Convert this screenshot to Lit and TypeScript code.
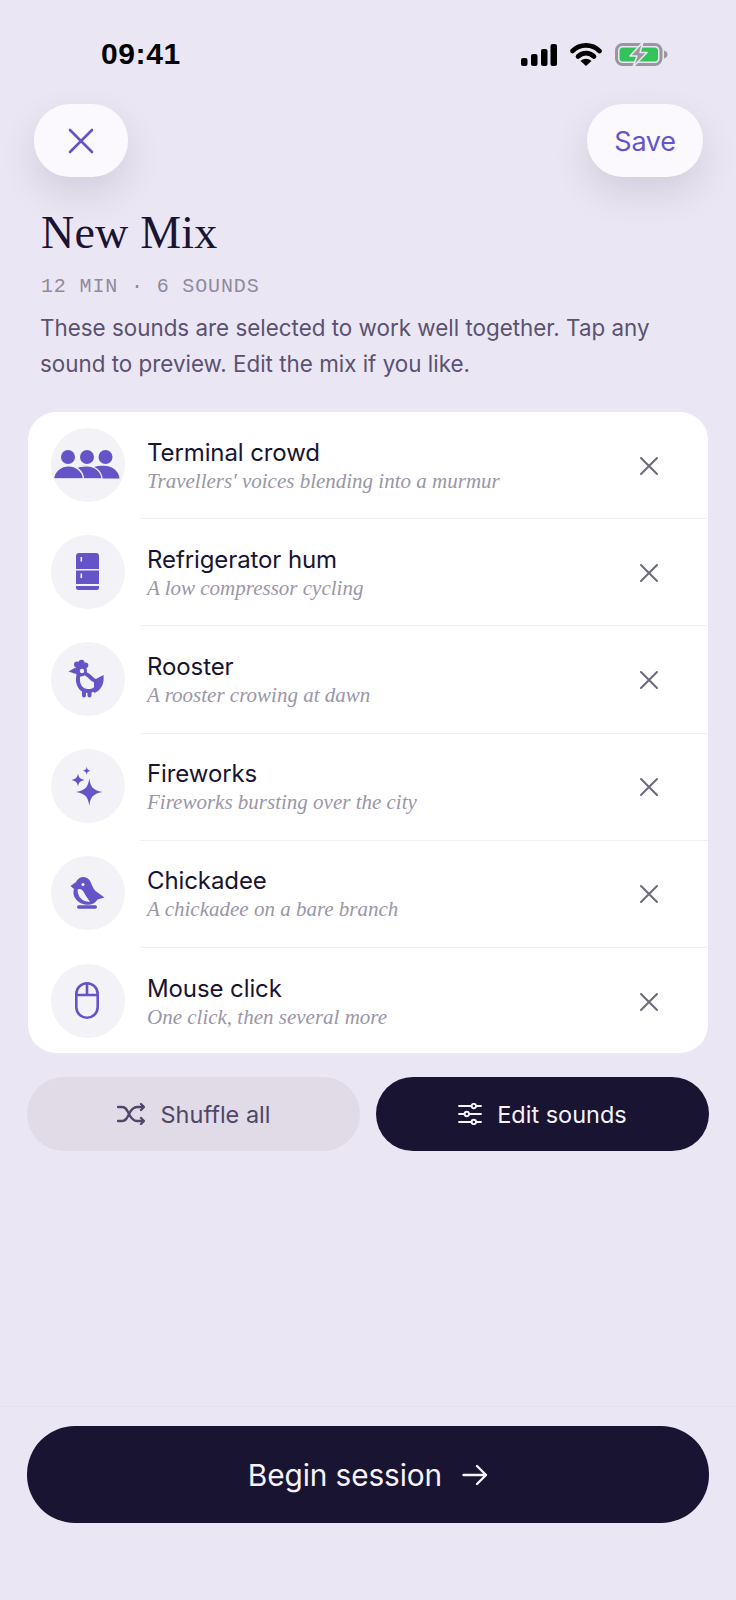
import { LitElement, html, css, svg } from "lit";
import { customElement } from "lit/decorators.js";

const icons: Record<string, unknown> = {
  crowd: svg`
    <circle cx="17" cy="29" r="7"/><circle cx="36" cy="29" r="7"/><circle cx="54.5" cy="29" r="7"/>
    <path d="M47 50.5 C47 44 44 40.5 42 39.5 C45 38 49 37.8 53 37.8 C61 37.8 68 43 68.5 50.5 Z"/>
    <path class="cut" d="M29 50.8 C29 45 27 42 25 40 C28 38 32 37.8 36 37.8 C44 37.8 50.5 43.5 51 50.8 Z"/>
    <path class="cut" d="M2.5 50.8 C3 43 10 37.8 17.5 37.8 C25 37.8 32 43 32.5 50.8 Z"/>`,
  fridge: svg`
    <path d="M28 18 H45 a3 3 0 0 1 3 3 V34 H25 V21 a3 3 0 0 1 3-3 Z"/>
    <rect x="25" y="35.5" width="23" height="13.5"/>
    <path d="M25 51 H48 V52.5 a2.5 2.5 0 0 1 -2.5 2.5 H27.5 a2.5 2.5 0 0 1 -2.5 -2.5 Z"/>
    <rect class="hole" x="29.5" y="22" width="1.6" height="4.5"/>
    <rect class="hole" x="29.5" y="38.5" width="1.6" height="4.5"/>`,
  rooster: svg`
    <circle cx="26" cy="22.5" r="3"/><circle cx="30.5" cy="20.8" r="3"/><circle cx="34.5" cy="23.2" r="2.8"/>
    <circle cx="30" cy="28.5" r="6"/>
    <path d="M24.5 25.5 L17.5 29.5 L25 32 Z"/>
    <path d="M43 38 L52.5 33 C53.5 42 50 48.5 43 51 Z"/>
    <path class="line" d="M27.5 33 C25.5 41 29 49 37 49 C41 49 44 48 46 45 M43.5 38.5 C41 38 39 33.5 35 32"/>
    <path class="line" d="M33 50 V53.5 M38.5 50 V53.5"/>
    <circle class="hole" cx="31" cy="29" r="2.2"/>`,
  sparkle: svg`
    <path d="M38.3 29.5 C39.8 38 41.5 41 51.5 43 C41.5 45 39.8 48 38.3 56.5 C36.8 48 35 45 25 43 C35 41 36.8 38 38.3 29.5 Z"/>
    <path d="M27 24.5 C27.7 28.2 28.8 30 33.5 31 C28.8 32 27.7 33.8 27 37.5 C26.3 33.8 25.2 32 20.5 31 C25.2 30 26.3 28.2 27 24.5 Z"/>
    <path d="M35.7 17.7 C36.2 20.2 36.8 21 39.7 21.7 C36.8 22.4 36.2 23.2 35.7 25.7 C35.2 23.2 34.6 22.4 31.7 21.7 C34.6 21 35.2 20.2 35.7 17.7 Z"/>`,
  chickadee: svg`
    <path d="M19.5 30 L25 26 C28 20 34.5 19.5 38.5 24 C40.5 27 41 31 44.5 35 L53.5 41.5 L46.5 43.5 C44 48 39 49.5 34 48.5 C26 47 20.5 40 23 33 Z"/>
    <rect x="26" y="49.3" width="20" height="3.4" rx="1.7"/>
    <path class="hole" d="M26.5 33.5 C29 32 31.5 33.5 33 36.5 C35 40.5 37 43 39 45.7 C33 46.3 26.5 42 26.5 33.5 Z"/>
    <circle class="hole" cx="32" cy="28.5" r="1.5"/>`,
  mouse: svg`
    <rect class="thin" x="25.3" y="19.3" width="21.4" height="34.4" rx="10.7"/>
    <path class="thin" d="M25.3 31 H46.7 M36 19.3 V31"/>`,
};

const sounds = [
  { icon: "crowd", title: "Terminal crowd", sub: "Travellers' voices blending into a murmur" },
  { icon: "fridge", title: "Refrigerator hum", sub: "A low compressor cycling" },
  { icon: "rooster", title: "Rooster", sub: "A rooster crowing at dawn" },
  { icon: "sparkle", title: "Fireworks", sub: "Fireworks bursting over the city" },
  { icon: "chickadee", title: "Chickadee", sub: "A chickadee on a bare branch" },
  { icon: "mouse", title: "Mouse click", sub: "One click, then several more" },
];

@customElement("app-root")
export class AppRoot extends LitElement {
  static styles = css`
    :host { display: block; }
    .page {
      height: 1600px; box-sizing: border-box; background: #ebe6f3; display: flex; flex-direction: column;
      font-family: Inter, "Noto Sans", sans-serif; color: #1a1433; overflow: hidden;
    }
    .status { height: 104px; box-sizing: border-box; padding: 38px 68px 0 101px; display: flex; justify-content: space-between; align-items: flex-start; }
    .time { font: 700 30px/32px "Liberation Sans", sans-serif; color: #000; letter-spacing: 0.6px; }
    .status-icons { display: flex; align-items: center; gap: 13px; margin-top: 4px; }
    .status-icons svg { display: block; }
    .topbar { display: flex; justify-content: space-between; padding: 0 33px 0 34px; height: 73px; }
    .pill {
      height: 73px; background: #fcf9fe; border-radius: 36px; display: flex; align-items: center; justify-content: center;
      box-shadow: 0 16px 36px rgba(40, 30, 70, 0.12); color: #6554c8;
    }
    .pill.close { width: 94px; }
    .pill.save { width: 116px; font-size: 27px; letter-spacing: -0.3px; padding-top: 2px; box-sizing: border-box; }
    .head { padding: 28px 40px 0 41px; }
    h1 { margin: 0; font: 400 46px/56px "Liberation Serif", serif; color: #1a1433; letter-spacing: 0.2px; }
    .meta { margin-top: 14px; font: 400 20px/24px "Liberation Mono", monospace; letter-spacing: 0.85px; color: #8f8a9e; }
    .desc { margin: 11px 0 0 -1px; font-size: 22.4px; line-height: 36px; color: #5a5270; }
    .card { margin: 30px 28px 0; background: #fff; border-radius: 28px; height: 641px; overflow: hidden; }
    .row { height: 107.2px; display: flex; align-items: center; padding: 0 49px 0 23px; position: relative; box-sizing: border-box; }
    .row + .row::before { content: ""; position: absolute; top: -1px; left: 112px; right: 0; height: 1px; background: #f1eff4; }
    .circle { width: 74px; height: 74px; border-radius: 50%; background: #f3f2f6; flex: none; margin-top: -2px; }
    .circle svg { display: block; fill: #6554c8; }
    .circle .cut { stroke: #f3f2f6; stroke-width: 1.3; }
    .circle .hole { fill: #f3f2f6; }
    .circle .line { fill: none; stroke: #6554c8; stroke-width: 4; stroke-linecap: round; stroke-linejoin: round; }
    .circle .thin { fill: none; stroke: #6554c8; stroke-width: 2.6; }
    .text { margin-left: 22px; flex: 1; min-width: 0; }
    .title { font-size: 24px; line-height: 30px; color: #1a1433; letter-spacing: -0.1px; }
    .sub { font: italic 400 21px/26px "Liberation Serif", serif; color: #9a96a8; margin-top: 0; }
    .x { flex: none; display: block; }
    .actions { display: flex; gap: 16px; padding: 24px 27px 0; }
    .btn { flex: 1; height: 74px; border-radius: 37px; display: flex; align-items: center; justify-content: center; gap: 16px; font-size: 23.5px; }
    .btn.soft { background: #e0dbe7; color: #4f4668; }
    .btn.dark { background: #1a1433; color: #f5f2fa; gap: 15px; }
    .footer { margin-top: auto; border-top: 1px solid #e6e1ee; padding: 19px 27px 77px; }
    .begin { height: 97px; border-radius: 48px; background: #1a1433; color: #f5f2fa; display: flex; align-items: center; justify-content: center; gap: 20px; font-size: 29.8px; letter-spacing: -0.1px; }
    svg { flex: none; }
  `;

  render() {
    return html`
      <div class="page">
        <div class="status">
          <div class="time">09:41</div>
          <div class="status-icons">
            <svg width="36" height="22" viewBox="0 0 36 22" fill="#000">
              <rect x="0" y="14" width="6.5" height="8" rx="2"/><rect x="10" y="10" width="6.5" height="12" rx="2"/>
              <rect x="20" y="5" width="6.5" height="17" rx="2"/><rect x="29.5" y="0" width="6.5" height="22" rx="2"/>
            </svg>
            <svg width="32" height="23" viewBox="0 0 32 23">
              <path d="M2.5 8 C10 0.5 22 0.5 29.5 8" fill="none" stroke="#000" stroke-width="4.6" stroke-linecap="round"/>
              <path d="M8 13.5 C12.5 9 19.5 9 24 13.5" fill="none" stroke="#000" stroke-width="4.6" stroke-linecap="round"/>
              <path d="M10.5 18 C14 15 18 15 21.5 18 L16 23 Z" fill="#000"/>
            </svg>
            <svg width="53" height="25" viewBox="0 0 53 25">
              <rect x="1.5" y="2.5" width="44.5" height="20" rx="6" fill="none" stroke="#9a979c" stroke-width="3"/>
              <rect x="4.5" y="5.5" width="38.5" height="14" rx="3.5" fill="#34c35a"/>
              <path d="M49 8.5 C51.5 9.2 52.5 10.5 52.5 12.5 C52.5 14.5 51.5 15.8 49 16.5 Z" fill="#9a979c"/>
              <path d="M28 0 L15 14 H22 L18 25 L32 10.5 H25 Z" fill="#9a979c" stroke="#ebe6f3" stroke-width="1.6" stroke-linejoin="round"/>
            </svg>
          </div>
        </div>
        <div class="topbar">
          <div class="pill close">
            <svg width="26" height="26" viewBox="0 0 26 26" fill="none" stroke="#6554c8" stroke-width="2.6" stroke-linecap="round"><path d="M2 2 L24 24 M24 2 L2 24"/></svg>
          </div>
          <div class="pill save">Save</div>
        </div>
        <div class="head">
          <h1>New Mix</h1>
          <div class="meta">12 MIN · 6 SOUNDS</div>
          <p class="desc">These sounds are selected to work well together. Tap any<br />sound to preview. Edit the mix if you like.</p>
        </div>
        <div class="card">
          ${sounds.map(
            (s) => html`
              <div class="row">
                <div class="circle"><svg width="74" height="74" viewBox="0 0 74 74">${icons[s.icon]}</svg></div>
                <div class="text">
                  <div class="title">${s.title}</div>
                  <div class="sub">${s.sub}</div>
                </div>
                <svg class="x" width="20" height="20" viewBox="0 0 20 20" fill="none" stroke="#6f6b7c" stroke-width="2.1" stroke-linecap="round"><path d="M2 2 L18 18 M18 2 L2 18"/></svg>
              </div>
            `
          )}
        </div>
        <div class="actions">
          <div class="btn soft">
            <svg width="28" height="24" viewBox="0 0 28 24" fill="none" stroke="#4f4668" stroke-width="2.3" stroke-linecap="round" stroke-linejoin="round">
              <path d="M1 5 H5 C9 5 10 8 12 12 C14 16 16 19 20 19 H25 M1 19 H5 C9 19 10 16 12 12 C14 8 16 5 20 5 H25"/>
              <path d="M24 2 L27 5 L24 8 M24 16 L27 19 L24 22"/>
            </svg>
            Shuffle all
          </div>
          <div class="btn dark">
            <svg width="24" height="22" viewBox="0 0 24 22" fill="none" stroke="#f5f2fa" stroke-width="1.9" stroke-linecap="round">
              <path d="M1 3 H13.5 M18 3 H23 M1 11 H6.5 M11 11 H23 M1 19 H13.5 M18 19 H23"/>
              <circle cx="15.8" cy="3" r="2.2"/><circle cx="8.8" cy="11" r="2.2"/><circle cx="15.8" cy="19" r="2.2"/>
            </svg>
            Edit sounds
          </div>
        </div>
        <div class="footer">
          <div class="begin">
            Begin session
            <svg width="26" height="22" viewBox="0 0 26 22" fill="none" stroke="#f5f2fa" stroke-width="2.4" stroke-linecap="round" stroke-linejoin="round"><path d="M1.5 11 H24 M15 2 L24 11 L15 20"/></svg>
          </div>
        </div>
      </div>
    `;
  }
}
